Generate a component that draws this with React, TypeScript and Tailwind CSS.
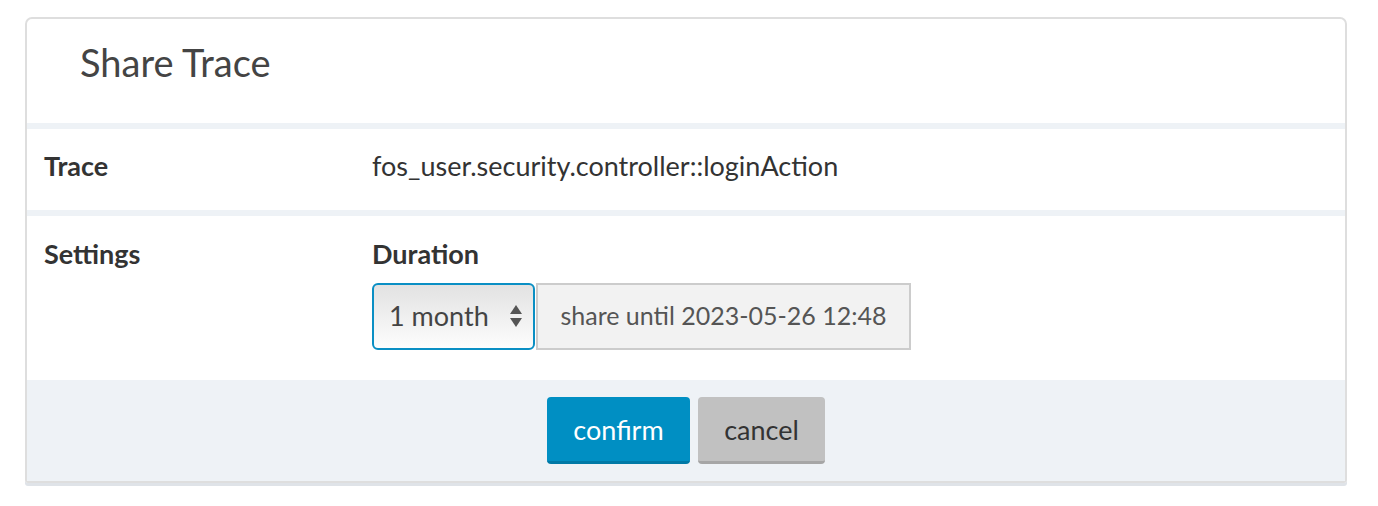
import React from 'react';

const font = { fontFamily: 'Lato, "Liberation Sans", sans-serif' };

const App = () => {
    return (
        <div className="w-[1378px] h-[506px] bg-white pt-[17px] pl-[25px]" style={font}>
            <div className="w-[1322px] border-2 border-[#dedede] rounded-t-[7px] rounded-b-[3px] shadow-[0_3px_0_#dfe3e8] overflow-hidden">
                {/* header */}
                <div className="h-[104px] flex items-center pl-[53px] pb-[18px]">
                    <h2 className="text-[38px] text-[#444] font-normal">Share Trace</h2>
                </div>
                <div className="h-[6px] bg-[#eef2f6]" />

                {/* trace row */}
                <div className="h-[81px] flex items-center pb-[6px]">
                    <div className="w-[345px] pl-[17px] text-[27px] font-bold text-[#333]">Trace</div>
                    <div className="text-[27px] text-[#333]">fos_user.security.controller::loginAction</div>
                </div>
                <div className="h-[6px] bg-[#eef2f6]" />

                {/* settings row */}
                <div className="h-[164px] flex pt-[18px]">
                    <div className="w-[345px] pl-[17px] text-[27px] font-bold text-[#333]">Settings</div>
                    <div className="flex flex-col">
                        <div className="text-[27px] font-bold text-[#333]">Duration</div>
                        <div className="flex mt-[8px]">
                            <div className="w-[163px] h-[67px] border-2 border-[#0a8fc4] rounded-[6px] bg-gradient-to-b from-[#e2e2e2] to-[#fdfdfd] flex items-center justify-between pl-[15px] pr-[10px]">
                                <span className="text-[27px] text-[#444]">1 month</span>
                                <svg width="14" height="26" viewBox="0 0 14 26">
                                    <path d="M7 2 L13 11 L1 11 Z" fill="#555" />
                                    <path d="M7 24 L13 15 L1 15 Z" fill="#555" />
                                </svg>
                            </div>
                            <div className="w-[375px] h-[67px] ml-[1px] border-2 border-[#cccccc] bg-[#f2f2f2] flex items-center justify-center">
                                <span className="text-[25px] text-[#555]">share until 2023-05-26 12:48</span>
                            </div>
                        </div>
                    </div>
                </div>

                {/* footer */}
                <div className="h-[101px] bg-[#eef2f6] flex justify-center items-center gap-[8px]">
                    <button className="w-[143px] h-[67px] pt-[3px] bg-[#008fc3] border-b-[3px] border-[#0079a6] rounded-[4px] text-white text-[27px]">
                        confirm
                    </button>
                    <button className="w-[127px] h-[67px] pt-[3px] bg-[#c1c1c1] border-b-[3px] border-[#a6a6a6] rounded-[4px] text-[#333] text-[27px]">
                        cancel
                    </button>
                </div>
            </div>
        </div>
    );
};

export default App;
